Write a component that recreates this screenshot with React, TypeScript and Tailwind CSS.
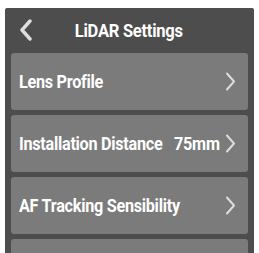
const rows = [
  { label: "Lens Profile", value: "" },
  { label: "Installation Distance", value: "75mm" },
  { label: "AF Tracking Sensibility", value: "" },
];

function Chevron({ dir }: { dir: "left" | "right" }) {
  if (dir === "left") {
    return (
      <svg width="14" height="22" viewBox="0 0 14 22" className="absolute left-[14px] top-[11px]">
        <path d="M11 2 L3 11 L11 20" fill="none" stroke="#dedede" strokeWidth="3.4" strokeLinecap="round" strokeLinejoin="round" />
      </svg>
    );
  }
  return (
    <svg width="11" height="19" viewBox="0 0 11 19" className="shrink-0">
      <path d="M2 1.5 L9 9.5 L2 17.5" fill="none" stroke="#dcdcdc" strokeWidth="2" strokeLinecap="round" strokeLinejoin="round" />
    </svg>
  );
}

export default function App() {
  return (
    <div
      className="w-[259px] h-[253px] bg-white overflow-hidden pt-[8px] px-[5px]"
      style={{ fontFamily: "Roboto, 'Liberation Sans', sans-serif" }}
    >
      <div className="h-[260px] bg-[#4d4d4d] rounded-t-[2px]">
        <div className="relative h-[44px] flex items-center justify-center">
          <Chevron dir="left" />
          <span className="inline-block text-white font-bold text-[18px] tracking-[-0.3px] scale-x-[0.92] pt-[1px] pr-[2px]">
            LiDAR Settings
          </span>
        </div>
        <div className="flex flex-col gap-[5px] px-[6px] pt-[1px]">
          {rows.map((r) => (
            <div
              key={r.label}
              className="h-[57px] bg-[#7b7b7b] rounded-[3px] flex items-center pl-[8px] pr-[12px]"
            >
              <div className="flex-1 min-w-0">
                <span className="inline-block whitespace-nowrap origin-left text-white font-bold text-[18px] tracking-[-0.3px] scale-x-[0.9]">
                  {r.label}
                </span>
              </div>
              {r.value && (
                <span className="inline-block whitespace-nowrap origin-right text-white font-bold text-[18px] tracking-[-0.3px] scale-x-[0.9] mr-[5px]">
                  {r.value}
                </span>
              )}
              <Chevron dir="right" />
            </div>
          ))}
          <div className="h-[57px] bg-[#7b7b7b] rounded-[3px]" />
        </div>
      </div>
    </div>
  );
}
